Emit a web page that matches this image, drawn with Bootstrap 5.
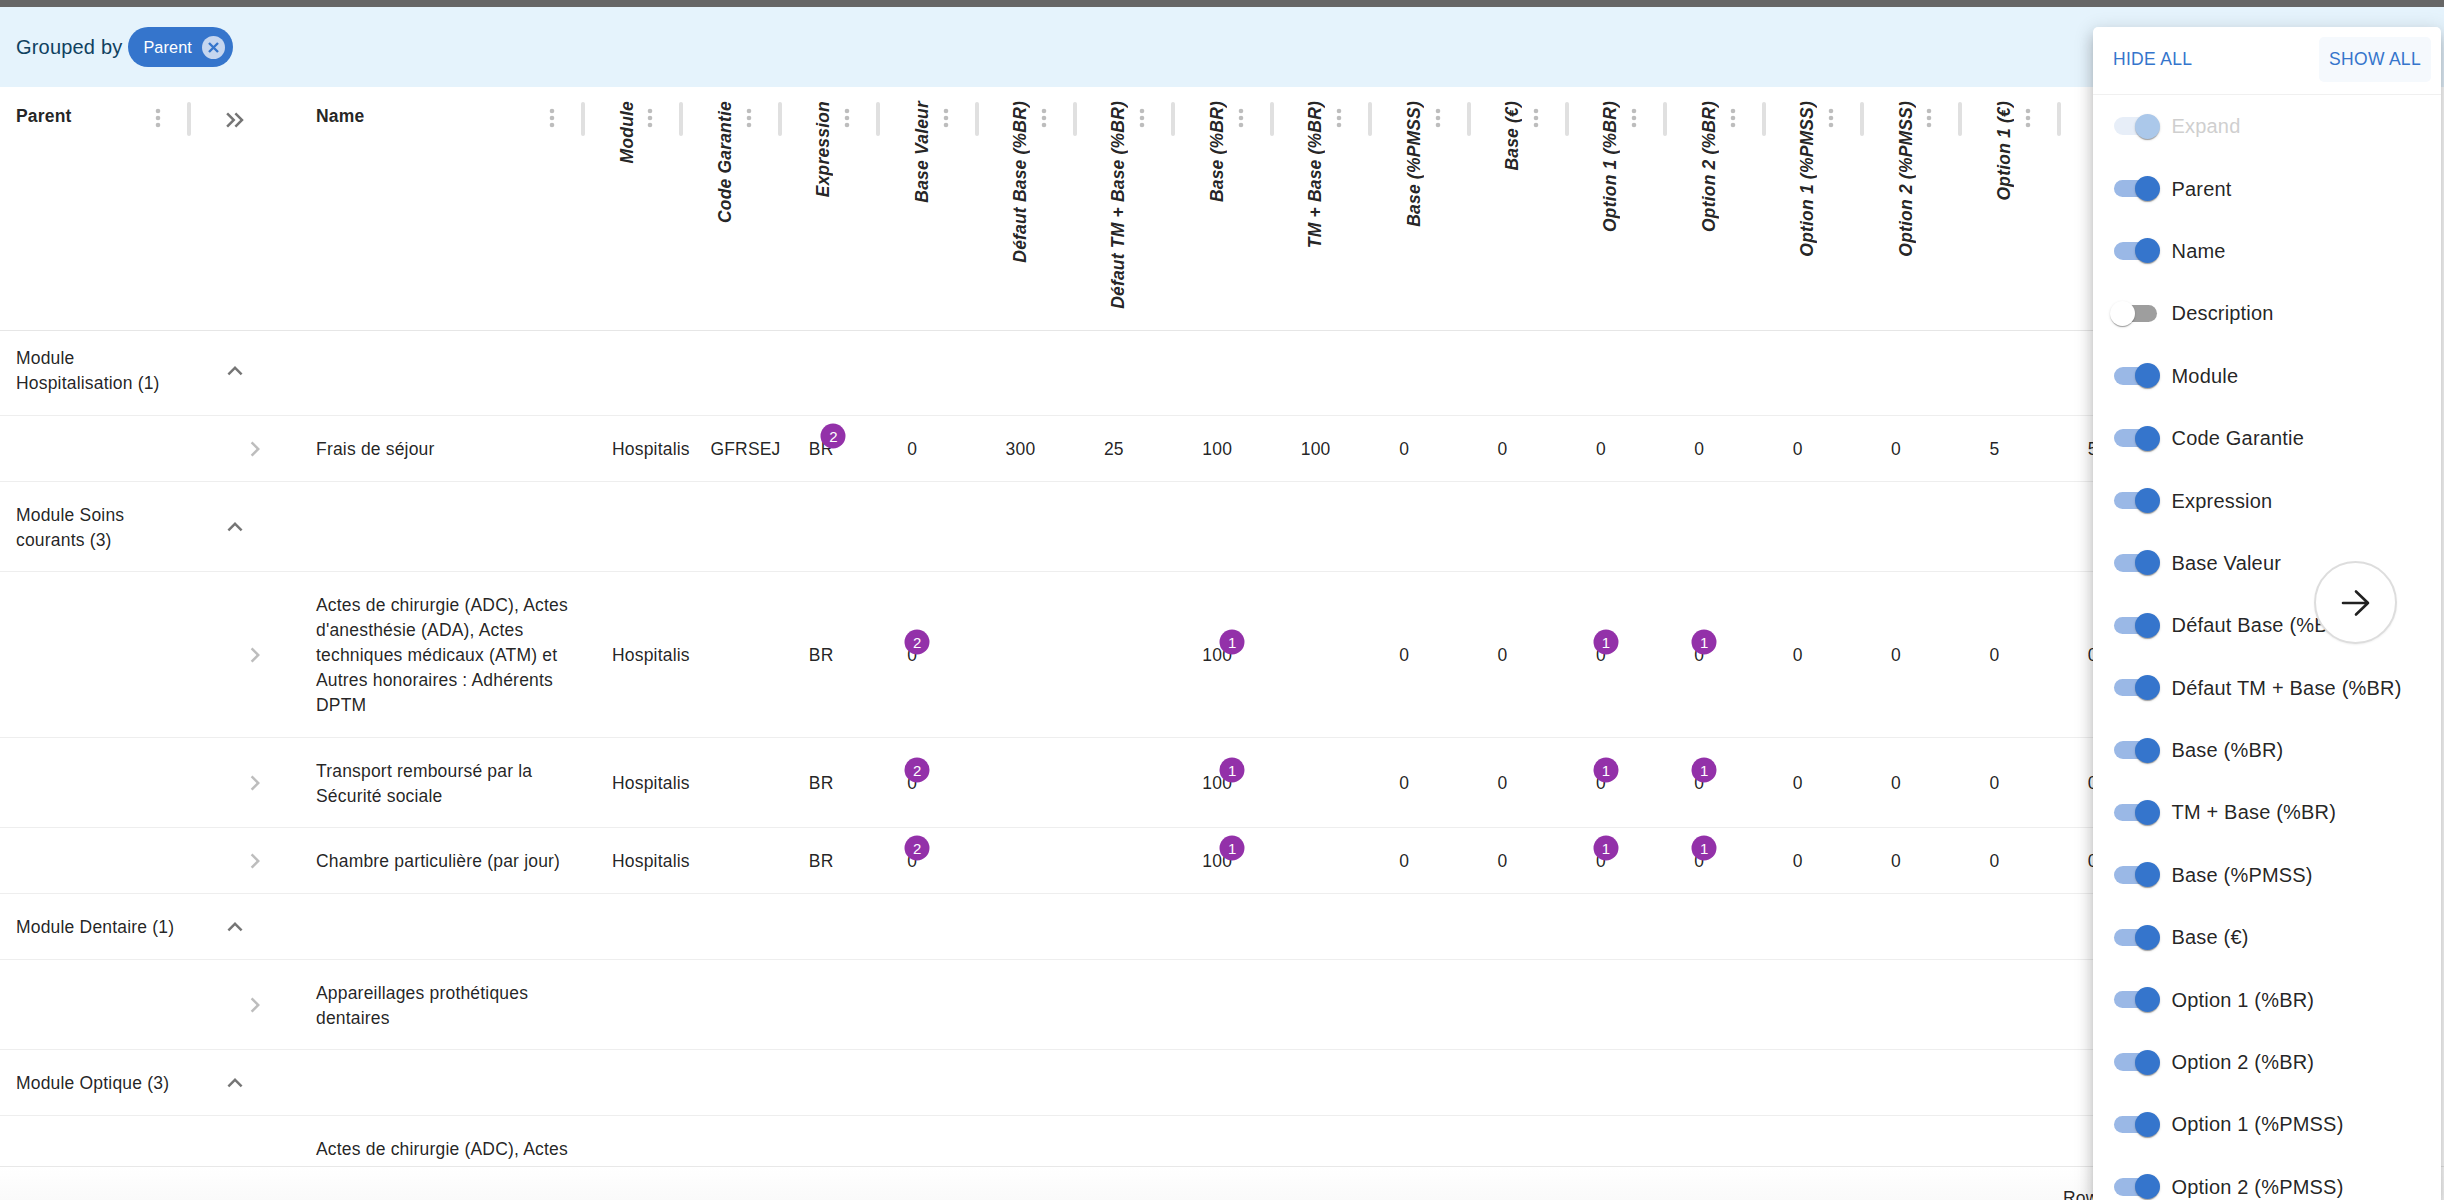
<!DOCTYPE html>
<html lang="fr">
<head>
<meta charset="utf-8">
<title>Grille</title>
<link href="https://cdn.jsdelivr.net/npm/bootstrap@5.3.0/dist/css/bootstrap.min.css" rel="stylesheet">
<style>
html,body{height:1200px;overflow:hidden;margin:0;background:#fff;font-family:"Liberation Sans",Arial,sans-serif;color:rgba(0,0,0,.87);}
.app-shell{height:1200px;position:relative;overflow:hidden;}
.top-strip{height:7px;background:#666;}
.group-bar{height:80px;background:#e5f3fc;padding-left:16px;color:#0f4160;font-size:20px;letter-spacing:.19px;gap:6px;}
.group-chip{height:40px;width:105px;border-radius:20px;background:#3575cc;color:#fff;font-size:16.25px;padding-left:15px;letter-spacing:.1px;}
.group-chip svg{margin-left:auto;margin-right:8px;}
.grid-wrap{height:1079px;overflow:hidden;}
.grid-table{table-layout:fixed;width:2170px;margin:0;border-collapse:separate;border-spacing:0;font-size:17.5px;line-height:25px;letter-spacing:.1875px;color:rgba(0,0,0,.87);}
.grid-table td{padding:21px 16px 18.6px;border-bottom:1px solid #eee;vertical-align:middle;background:transparent;box-shadow:none;}
.grid-table th{height:244px;padding:14px 11px 0 16px;border-bottom:1px solid #e6e6e6;vertical-align:top;font-weight:700;background:transparent;box-shadow:none;}
.grid-table .first-group td{padding-top:15px;padding-bottom:19px;}
.col-parent{width:202px}.col-toggle{width:98px}.col-name{width:296px}.col-data{width:98.4px}
.head-line{display:flex;align-items:flex-start;}
.head-label{line-height:25px;margin-top:3px;}
.head-rot{writing-mode:vertical-rl;transform:rotate(180deg);font-style:italic;line-height:25px;white-space:nowrap;margin-left:2.5px;}
.head-dots{margin-left:auto;margin-top:7px;flex:none;}
.head-sep{width:4px;height:34px;background:#e0e0e0;border-radius:2px;margin-left:24px;margin-top:1px;flex:none;}
.grid-table td.toggle-group{padding:1px 0 0 18px;}
.grid-table td.toggle-row{padding:1px 0 0 38px;}
.grid-table .first-group td.toggle-group{padding:0 0 4px 18px;}
.grid-table th.toggle-head{padding:18px 0 0 18px;}
.grid-table svg{display:block;}
.ico-grey{fill:#757575;}
.ico-light{fill:#bdbdbd;}
.num-wrap{position:relative;display:inline-block;}
.num-bubble{position:absolute;top:-1px;left:100%;transform:translate(-50%,-50%);width:25px;height:25px;border-radius:50%;background:#9331a9;color:#fff;font-size:15px;line-height:25px;text-align:center;letter-spacing:0;}
.nowrap-cell{white-space:nowrap;}
.foot-bar{height:34px;border-top:1px solid #e8e8e8;background:linear-gradient(#fff,#fafafa);overflow:hidden;}
.foot-pager{width:381px;padding-top:19px;font-size:17.5px;line-height:25px;letter-spacing:.19px;white-space:nowrap;}
.col-panel{position:absolute;top:27px;left:2093px;right:3px;bottom:0;background:#fff;border-top-left-radius:5px;border-top-right-radius:5px;box-shadow:0 6px 6px -4px rgba(0,0,0,.2),0 10px 14px 1px rgba(0,0,0,.14),0 4px 18px 3px rgba(0,0,0,.12);overflow:hidden;}
.panel-head{height:68px;border-bottom:1px solid #f0f0f0;padding:10px 10px 0 11px;}
.panel-btn{color:#3575cc;font-size:17.5px;letter-spacing:.3px;height:45px;padding:0 9px;border-radius:5px;line-height:45px;white-space:nowrap;}
.panel-btn-on{background:#f5f9fd;width:112px;padding:0;text-align:center;}
.toggle-row-item{height:62.4px;padding-left:21px;font-size:20px;letter-spacing:.19px;color:rgba(0,0,0,.87);white-space:nowrap;margin:0;}
.sw-input{position:absolute;opacity:0;width:0;height:0;}
.sw-track{position:relative;display:block;width:43px;height:17.5px;border-radius:9px;background:#9e9e9e;margin-right:14.5px;flex:none;}
.sw-track::after{content:"";position:absolute;left:-4px;top:-3.75px;width:25px;height:25px;border-radius:50%;background:#fff;box-shadow:0 2px 1px -1px rgba(0,0,0,.2),0 1px 1px 0 rgba(0,0,0,.14),0 1px 3px 0 rgba(0,0,0,.12);}
.sw-input:checked + .sw-track{background:#9ab8e6;}
.sw-input:checked + .sw-track::after{left:21px;background:#3575cc;}
.toggle-off .sw-track{background:#e7eef8!important;}
.toggle-off .sw-track::after{background:#abc8ea!important;}
.toggle-off{color:#cfcfcf;}
.round-next{position:absolute;left:2314px;top:561px;width:83px;height:83px;border-radius:50%;background:#fff;border:2px solid #ddd;box-shadow:0 1px 2px rgba(0,0,0,.06);padding:0;}
</style>
</head>
<body>
<div class="app-shell d-flex flex-column">
  <div class="top-strip"></div>
  <div class="group-bar d-flex align-items-center">
    <span>Grouped by</span>
    <span class="group-chip d-flex align-items-center">Parent
      <svg width="23" height="23" viewBox="0 0 23 23"><circle cx="11.5" cy="11.5" r="11.5" fill="#c5d6ef"/><path d="M7 7l9 9M16 7l-9 9" stroke="#3575cc" stroke-width="2.4" fill="none"/></svg>
    </span>
  </div>
  <div class="grid-wrap">
    <table class="table grid-table">
      <colgroup>
        <col class="col-parent"><col class="col-toggle"><col class="col-name">
        <col class="col-data"><col class="col-data"><col class="col-data"><col class="col-data"><col class="col-data"><col class="col-data"><col class="col-data"><col class="col-data"><col class="col-data"><col class="col-data"><col class="col-data"><col class="col-data"><col class="col-data"><col class="col-data"><col class="col-data"><col class="col-data">
      </colgroup>
      <thead>
        <tr>
          <th><div class="head-line"><span class="head-label">Parent</span><svg class="head-dots" width="10" height="20" viewBox="0 0 10 20"><circle cx="5" cy="3" r="2.3" fill="#bdbdbd"/><circle cx="5" cy="10" r="2.3" fill="#bdbdbd"/><circle cx="5" cy="17" r="2.3" fill="#bdbdbd"/></svg><span class="head-sep"></span></div></th>
          <th class="toggle-head"><svg width="30" height="30" viewBox="0 0 24 24"><path class="ico-grey" d="M6.41 6 5 7.41 9.58 12 5 16.59 6.41 18l6-6z"/><path class="ico-grey" d="M13 6l-1.41 1.41L16.17 12l-4.58 4.59L13 18l6-6z"/></svg></th>
          <th><div class="head-line"><span class="head-label">Name</span><svg class="head-dots" width="10" height="20" viewBox="0 0 10 20"><circle cx="5" cy="3" r="2.3" fill="#bdbdbd"/><circle cx="5" cy="10" r="2.3" fill="#bdbdbd"/><circle cx="5" cy="17" r="2.3" fill="#bdbdbd"/></svg><span class="head-sep"></span></div></th>
          <th><div class="head-line"><span class="head-rot">Module</span><svg class="head-dots" width="10" height="20" viewBox="0 0 10 20"><circle cx="5" cy="3" r="2.3" fill="#bdbdbd"/><circle cx="5" cy="10" r="2.3" fill="#bdbdbd"/><circle cx="5" cy="17" r="2.3" fill="#bdbdbd"/></svg><span class="head-sep"></span></div></th>
          <th><div class="head-line"><span class="head-rot">Code Garantie</span><svg class="head-dots" width="10" height="20" viewBox="0 0 10 20"><circle cx="5" cy="3" r="2.3" fill="#bdbdbd"/><circle cx="5" cy="10" r="2.3" fill="#bdbdbd"/><circle cx="5" cy="17" r="2.3" fill="#bdbdbd"/></svg><span class="head-sep"></span></div></th>
          <th><div class="head-line"><span class="head-rot">Expression</span><svg class="head-dots" width="10" height="20" viewBox="0 0 10 20"><circle cx="5" cy="3" r="2.3" fill="#bdbdbd"/><circle cx="5" cy="10" r="2.3" fill="#bdbdbd"/><circle cx="5" cy="17" r="2.3" fill="#bdbdbd"/></svg><span class="head-sep"></span></div></th>
          <th><div class="head-line"><span class="head-rot">Base Valeur</span><svg class="head-dots" width="10" height="20" viewBox="0 0 10 20"><circle cx="5" cy="3" r="2.3" fill="#bdbdbd"/><circle cx="5" cy="10" r="2.3" fill="#bdbdbd"/><circle cx="5" cy="17" r="2.3" fill="#bdbdbd"/></svg><span class="head-sep"></span></div></th>
          <th><div class="head-line"><span class="head-rot">Défaut Base (%BR)</span><svg class="head-dots" width="10" height="20" viewBox="0 0 10 20"><circle cx="5" cy="3" r="2.3" fill="#bdbdbd"/><circle cx="5" cy="10" r="2.3" fill="#bdbdbd"/><circle cx="5" cy="17" r="2.3" fill="#bdbdbd"/></svg><span class="head-sep"></span></div></th>
          <th><div class="head-line"><span class="head-rot">Défaut TM + Base (%BR)</span><svg class="head-dots" width="10" height="20" viewBox="0 0 10 20"><circle cx="5" cy="3" r="2.3" fill="#bdbdbd"/><circle cx="5" cy="10" r="2.3" fill="#bdbdbd"/><circle cx="5" cy="17" r="2.3" fill="#bdbdbd"/></svg><span class="head-sep"></span></div></th>
          <th><div class="head-line"><span class="head-rot">Base (%BR)</span><svg class="head-dots" width="10" height="20" viewBox="0 0 10 20"><circle cx="5" cy="3" r="2.3" fill="#bdbdbd"/><circle cx="5" cy="10" r="2.3" fill="#bdbdbd"/><circle cx="5" cy="17" r="2.3" fill="#bdbdbd"/></svg><span class="head-sep"></span></div></th>
          <th><div class="head-line"><span class="head-rot">TM + Base (%BR)</span><svg class="head-dots" width="10" height="20" viewBox="0 0 10 20"><circle cx="5" cy="3" r="2.3" fill="#bdbdbd"/><circle cx="5" cy="10" r="2.3" fill="#bdbdbd"/><circle cx="5" cy="17" r="2.3" fill="#bdbdbd"/></svg><span class="head-sep"></span></div></th>
          <th><div class="head-line"><span class="head-rot">Base (%PMSS)</span><svg class="head-dots" width="10" height="20" viewBox="0 0 10 20"><circle cx="5" cy="3" r="2.3" fill="#bdbdbd"/><circle cx="5" cy="10" r="2.3" fill="#bdbdbd"/><circle cx="5" cy="17" r="2.3" fill="#bdbdbd"/></svg><span class="head-sep"></span></div></th>
          <th><div class="head-line"><span class="head-rot">Base (€)</span><svg class="head-dots" width="10" height="20" viewBox="0 0 10 20"><circle cx="5" cy="3" r="2.3" fill="#bdbdbd"/><circle cx="5" cy="10" r="2.3" fill="#bdbdbd"/><circle cx="5" cy="17" r="2.3" fill="#bdbdbd"/></svg><span class="head-sep"></span></div></th>
          <th><div class="head-line"><span class="head-rot">Option 1 (%BR)</span><svg class="head-dots" width="10" height="20" viewBox="0 0 10 20"><circle cx="5" cy="3" r="2.3" fill="#bdbdbd"/><circle cx="5" cy="10" r="2.3" fill="#bdbdbd"/><circle cx="5" cy="17" r="2.3" fill="#bdbdbd"/></svg><span class="head-sep"></span></div></th>
          <th><div class="head-line"><span class="head-rot">Option 2 (%BR)</span><svg class="head-dots" width="10" height="20" viewBox="0 0 10 20"><circle cx="5" cy="3" r="2.3" fill="#bdbdbd"/><circle cx="5" cy="10" r="2.3" fill="#bdbdbd"/><circle cx="5" cy="17" r="2.3" fill="#bdbdbd"/></svg><span class="head-sep"></span></div></th>
          <th><div class="head-line"><span class="head-rot">Option 1 (%PMSS)</span><svg class="head-dots" width="10" height="20" viewBox="0 0 10 20"><circle cx="5" cy="3" r="2.3" fill="#bdbdbd"/><circle cx="5" cy="10" r="2.3" fill="#bdbdbd"/><circle cx="5" cy="17" r="2.3" fill="#bdbdbd"/></svg><span class="head-sep"></span></div></th>
          <th><div class="head-line"><span class="head-rot">Option 2 (%PMSS)</span><svg class="head-dots" width="10" height="20" viewBox="0 0 10 20"><circle cx="5" cy="3" r="2.3" fill="#bdbdbd"/><circle cx="5" cy="10" r="2.3" fill="#bdbdbd"/><circle cx="5" cy="17" r="2.3" fill="#bdbdbd"/></svg><span class="head-sep"></span></div></th>
          <th><div class="head-line"><span class="head-rot">Option 1 (€)</span><svg class="head-dots" width="10" height="20" viewBox="0 0 10 20"><circle cx="5" cy="3" r="2.3" fill="#bdbdbd"/><circle cx="5" cy="10" r="2.3" fill="#bdbdbd"/><circle cx="5" cy="17" r="2.3" fill="#bdbdbd"/></svg><span class="head-sep"></span></div></th>
          <th><div class="head-line"><span class="head-rot">Option 2 (€)</span></div></th>
        </tr>
      </thead>
      <tbody>
        <tr class="first-group"><td>Module Hospitalisation (1)</td><td class="toggle-group"><svg width="30" height="30" viewBox="0 0 24 24"><path class="ico-grey" d="M12 8l-6 6 1.41 1.41L12 10.83l4.59 4.58L18 14z"/></svg></td><td colspan="17"></td></tr>
        <tr><td></td><td class="toggle-row"><svg width="30" height="30" viewBox="0 0 24 24"><path class="ico-light" d="M10 6 8.59 7.41 13.17 12l-4.58 4.59L10 18l6-6z"/></svg></td><td>Frais de séjour</td><td class="nowrap-cell">Hospitalis</td><td>GFRSEJ</td><td><span class="num-wrap">BR<span class="num-bubble">2</span></span></td><td>0</td><td>300</td><td>25</td><td>100</td><td>100</td><td>0</td><td>0</td><td>0</td><td>0</td><td>0</td><td>0</td><td>5</td><td>5</td></tr>
        <tr><td>Module Soins courants (3)</td><td class="toggle-group"><svg width="30" height="30" viewBox="0 0 24 24"><path class="ico-grey" d="M12 8l-6 6 1.41 1.41L12 10.83l4.59 4.58L18 14z"/></svg></td><td colspan="17"></td></tr>
        <tr><td></td><td class="toggle-row"><svg width="30" height="30" viewBox="0 0 24 24"><path class="ico-light" d="M10 6 8.59 7.41 13.17 12l-4.58 4.59L10 18l6-6z"/></svg></td><td>Actes de chirurgie (ADC), Actes d'anesthésie (ADA), Actes techniques médicaux (ATM) et Autres honoraires : Adhérents DPTM</td><td class="nowrap-cell">Hospitalis</td><td></td><td>BR</td><td><span class="num-wrap">0<span class="num-bubble">2</span></span></td><td></td><td></td><td><span class="num-wrap">100<span class="num-bubble">1</span></span></td><td></td><td>0</td><td>0</td><td><span class="num-wrap">0<span class="num-bubble">1</span></span></td><td><span class="num-wrap">0<span class="num-bubble">1</span></span></td><td>0</td><td>0</td><td>0</td><td>0</td></tr>
        <tr><td></td><td class="toggle-row"><svg width="30" height="30" viewBox="0 0 24 24"><path class="ico-light" d="M10 6 8.59 7.41 13.17 12l-4.58 4.59L10 18l6-6z"/></svg></td><td>Transport remboursé par la Sécurité sociale</td><td class="nowrap-cell">Hospitalis</td><td></td><td>BR</td><td><span class="num-wrap">0<span class="num-bubble">2</span></span></td><td></td><td></td><td><span class="num-wrap">100<span class="num-bubble">1</span></span></td><td></td><td>0</td><td>0</td><td><span class="num-wrap">0<span class="num-bubble">1</span></span></td><td><span class="num-wrap">0<span class="num-bubble">1</span></span></td><td>0</td><td>0</td><td>0</td><td>0</td></tr>
        <tr><td></td><td class="toggle-row"><svg width="30" height="30" viewBox="0 0 24 24"><path class="ico-light" d="M10 6 8.59 7.41 13.17 12l-4.58 4.59L10 18l6-6z"/></svg></td><td>Chambre particulière (par jour)</td><td class="nowrap-cell">Hospitalis</td><td></td><td>BR</td><td><span class="num-wrap">0<span class="num-bubble">2</span></span></td><td></td><td></td><td><span class="num-wrap">100<span class="num-bubble">1</span></span></td><td></td><td>0</td><td>0</td><td><span class="num-wrap">0<span class="num-bubble">1</span></span></td><td><span class="num-wrap">0<span class="num-bubble">1</span></span></td><td>0</td><td>0</td><td>0</td><td>0</td></tr>
        <tr><td>Module Dentaire (1)</td><td class="toggle-group"><svg width="30" height="30" viewBox="0 0 24 24"><path class="ico-grey" d="M12 8l-6 6 1.41 1.41L12 10.83l4.59 4.58L18 14z"/></svg></td><td colspan="17"></td></tr>
        <tr><td></td><td class="toggle-row"><svg width="30" height="30" viewBox="0 0 24 24"><path class="ico-light" d="M10 6 8.59 7.41 13.17 12l-4.58 4.59L10 18l6-6z"/></svg></td><td>Appareillages prothétiques dentaires</td><td colspan="16"></td></tr>
        <tr><td>Module Optique (3)</td><td class="toggle-group"><svg width="30" height="30" viewBox="0 0 24 24"><path class="ico-grey" d="M12 8l-6 6 1.41 1.41L12 10.83l4.59 4.58L18 14z"/></svg></td><td colspan="17"></td></tr>
        <tr><td></td><td class="toggle-row"><svg width="30" height="30" viewBox="0 0 24 24"><path class="ico-light" d="M10 6 8.59 7.41 13.17 12l-4.58 4.59L10 18l6-6z"/></svg></td><td>Actes de chirurgie (ADC), Actes d'anesthésie (ADA), Actes techniques médicaux (ATM) et Autres honoraires : Adhérents DPTM</td><td colspan="16"></td></tr>
      </tbody>
    </table>
  </div>
  <div class="foot-bar d-flex justify-content-end">
    <div class="foot-pager">Rows per page:</div>
  </div>

  <aside class="col-panel">
    <div class="panel-head d-flex justify-content-between align-items-start">
      <span class="panel-btn">HIDE ALL</span>
      <span class="panel-btn panel-btn-on">SHOW ALL</span>
    </div>
    <div class="d-flex flex-column">
      <label class="toggle-row-item toggle-off d-flex align-items-center"><input class="sw-input" type="checkbox" checked disabled><span class="sw-track"></span>Expand</label>
      <label class="toggle-row-item d-flex align-items-center"><input class="sw-input" type="checkbox" checked><span class="sw-track"></span>Parent</label>
      <label class="toggle-row-item d-flex align-items-center"><input class="sw-input" type="checkbox" checked><span class="sw-track"></span>Name</label>
      <label class="toggle-row-item d-flex align-items-center"><input class="sw-input" type="checkbox"><span class="sw-track"></span>Description</label>
      <label class="toggle-row-item d-flex align-items-center"><input class="sw-input" type="checkbox" checked><span class="sw-track"></span>Module</label>
      <label class="toggle-row-item d-flex align-items-center"><input class="sw-input" type="checkbox" checked><span class="sw-track"></span>Code Garantie</label>
      <label class="toggle-row-item d-flex align-items-center"><input class="sw-input" type="checkbox" checked><span class="sw-track"></span>Expression</label>
      <label class="toggle-row-item d-flex align-items-center"><input class="sw-input" type="checkbox" checked><span class="sw-track"></span>Base Valeur</label>
      <label class="toggle-row-item d-flex align-items-center"><input class="sw-input" type="checkbox" checked><span class="sw-track"></span>Défaut Base (%BR)</label>
      <label class="toggle-row-item d-flex align-items-center"><input class="sw-input" type="checkbox" checked><span class="sw-track"></span>Défaut TM + Base (%BR)</label>
      <label class="toggle-row-item d-flex align-items-center"><input class="sw-input" type="checkbox" checked><span class="sw-track"></span>Base (%BR)</label>
      <label class="toggle-row-item d-flex align-items-center"><input class="sw-input" type="checkbox" checked><span class="sw-track"></span>TM + Base (%BR)</label>
      <label class="toggle-row-item d-flex align-items-center"><input class="sw-input" type="checkbox" checked><span class="sw-track"></span>Base (%PMSS)</label>
      <label class="toggle-row-item d-flex align-items-center"><input class="sw-input" type="checkbox" checked><span class="sw-track"></span>Base (€)</label>
      <label class="toggle-row-item d-flex align-items-center"><input class="sw-input" type="checkbox" checked><span class="sw-track"></span>Option 1 (%BR)</label>
      <label class="toggle-row-item d-flex align-items-center"><input class="sw-input" type="checkbox" checked><span class="sw-track"></span>Option 2 (%BR)</label>
      <label class="toggle-row-item d-flex align-items-center"><input class="sw-input" type="checkbox" checked><span class="sw-track"></span>Option 1 (%PMSS)</label>
      <label class="toggle-row-item d-flex align-items-center"><input class="sw-input" type="checkbox" checked><span class="sw-track"></span>Option 2 (%PMSS)</label>
    </div>
  </aside>
  <button class="round-next d-flex align-items-center justify-content-center" type="button" aria-label="Next">
    <svg width="30" height="28" viewBox="0 0 30 28"><path d="M2 14H27M15 2.5 27 14 15 25.5" fill="none" stroke="#212121" stroke-width="2.6" stroke-linecap="round" stroke-linejoin="round"/></svg>
  </button>
</div>
<script src="https://cdn.jsdelivr.net/npm/bootstrap@5.3.0/dist/js/bootstrap.bundle.min.js"></script>
</body>
</html>
